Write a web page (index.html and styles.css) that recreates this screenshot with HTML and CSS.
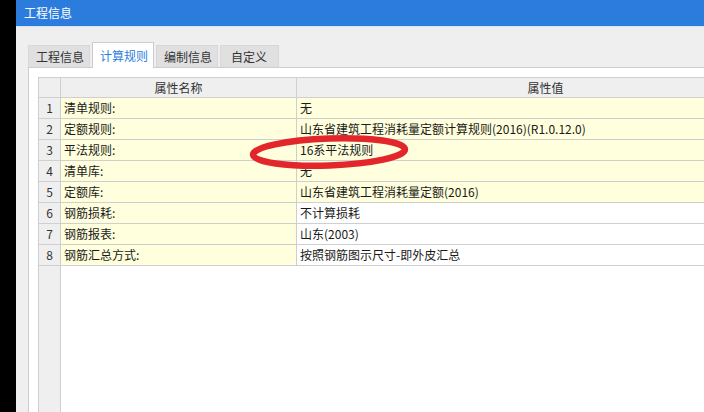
FILE: index.html
```html
<!DOCTYPE html>
<html lang="zh-CN">
<head>
<meta charset="utf-8">
<title>工程信息</title>
<link rel="stylesheet" href="styles.css">
</head>
<body>
<div class="strip"></div>
<div class="window">
  <div class="titlebar">工程信息</div>
  <div class="client">
    <div class="tabs">
      <div class="tab">工程信息</div>
      <div class="tab active">计算规则</div>
      <div class="tab">编制信息</div>
      <div class="tab">自定义</div>
    </div>
    <div class="panel">
      <div class="grid">
        <div class="row head">
          <div class="cell num"></div>
          <div class="cell name center">属性名称</div>
          <div class="cell value center">属性值</div>
        </div>
        <div class="row y">
          <div class="cell num">1</div><div class="cell name">清单规则:</div><div class="cell value">无</div>
        </div>
        <div class="row y">
          <div class="cell num">2</div><div class="cell name">定额规则:</div><div class="cell value">山东省建筑工程消耗量定额计算规则(2016)(R1.0.12.0)</div>
        </div>
        <div class="row y">
          <div class="cell num">3</div><div class="cell name">平法规则:</div><div class="cell value">16系平法规则</div>
        </div>
        <div class="row y">
          <div class="cell num">4</div><div class="cell name">清单库:</div><div class="cell value">无</div>
        </div>
        <div class="row y">
          <div class="cell num">5</div><div class="cell name">定额库:</div><div class="cell value">山东省建筑工程消耗量定额(2016)</div>
        </div>
        <div class="row">
          <div class="cell num">6</div><div class="cell name">钢筋损耗:</div><div class="cell value">不计算损耗</div>
        </div>
        <div class="row">
          <div class="cell num">7</div><div class="cell name">钢筋报表:</div><div class="cell value">山东(2003)</div>
        </div>
        <div class="row">
          <div class="cell num">8</div><div class="cell name">钢筋汇总方式:</div><div class="cell value">按照钢筋图示尺寸-即外皮汇总</div>
        </div>
        <div class="filler"><div class="num-fill"></div></div>
      </div>
    </div>
  </div>
</div>
<svg class="mark" width="180" height="50" viewBox="0 0 180 50" aria-hidden="true">
  <ellipse cx="89" cy="24" rx="76" ry="13.5" fill="none" stroke="#e3262b" stroke-width="6.5" transform="rotate(-2 89 24)"/>
</svg>
</body>
</html>
```

FILE: styles.css
```css
html, body {
  margin: 0;
  padding: 0;
  height: 100%;
  overflow: hidden;
}
body {
  display: flex;
  font-family: "Noto Sans CJK SC", "Microsoft YaHei", sans-serif;
  font-size: 12px;
  color: #1a1a1a;
  position: relative;
}
.strip {
  width: 16px;
  flex: none;
  background: #000;
}
.window {
  flex: 1;
  display: flex;
  flex-direction: column;
  overflow: hidden;
  background: #efefef;
}
.titlebar {
  height: 27px;
  line-height: 26px;
  padding-left: 8px;
  background: #2c7cdd;
  color: #fff;
  border-bottom: 1px solid #d6e4f4;
  box-sizing: border-box;
}
.client {
  flex: 1;
  display: flex;
  flex-direction: column;
  padding: 15px 0 0 12px;
  min-height: 0;
}
.tabs {
  display: flex;
  align-items: flex-end;
  gap: 2px;
  height: 25px;
  position: relative;
  z-index: 1;
}
.tab {
  height: 22px;
  line-height: 21px;
  box-sizing: border-box;
  padding: 0 7px;
  background: #e0e0e0;
  border: 1px solid #d8d8d8;
  border-bottom: none;
  color: #333;
  white-space: nowrap;
}
.tab:first-child { width: 62px; }
.tab.active {
  height: 26px;
  line-height: 26px;
  margin-bottom: -1px;
  background: #fff;
  border-color: #cdcdcd;
  color: #2c7cdd;
  width: 62px;
}
.tab:nth-child(3) { width: 62px; }
.tab:nth-child(4) { width: 59px; padding-left: 10px; }
.panel {
  flex: 1;
  background: #fff;
  border: 1px solid #cdcdcd;
  border-right: none;
  border-bottom: none;
  padding: 9px 0 0 9px;
  display: flex;
  flex-direction: column;
  min-width: 0;
}
.grid {
  flex: 1;
  display: flex;
  flex-direction: column;
  border-left: 1px solid #cfcfcf;
  border-top: 1px solid #cfcfcf;
  width: 800px;
}
.row {
  display: flex;
  height: 21px;
  flex: none;
}
.row.head {
  height: 20px;
  background: #efefef;
  color: #333;
}
.cell {
  box-sizing: border-box;
  border-right: 1px solid #cfcfcf;
  border-bottom: 1px solid #cfcfcf;
  line-height: 19px;
  padding-left: 3px;
  white-space: nowrap;
  overflow: hidden;
}
.num {
  width: 22px;
  padding: 0;
  text-align: center;
  background: #efefef;
  color: #333;
}
.name { width: 236px; }
.value { width: 498px; }
.center { text-align: center; padding: 0; }
.row .name { background: #ffffdd; }
.row.y .value { background: #ffffdd; }
.row.head .name, .row.head .value { background: #efefef; }
.filler {
  flex: 1;
  display: flex;
}
.num-fill {
  width: 22px;
  box-sizing: border-box;
  background: #efefef;
  border-right: 1px solid #cfcfcf;
}
.mark {
  position: absolute;
  left: 240px;
  top: 128px;
  pointer-events: none;
}
```
